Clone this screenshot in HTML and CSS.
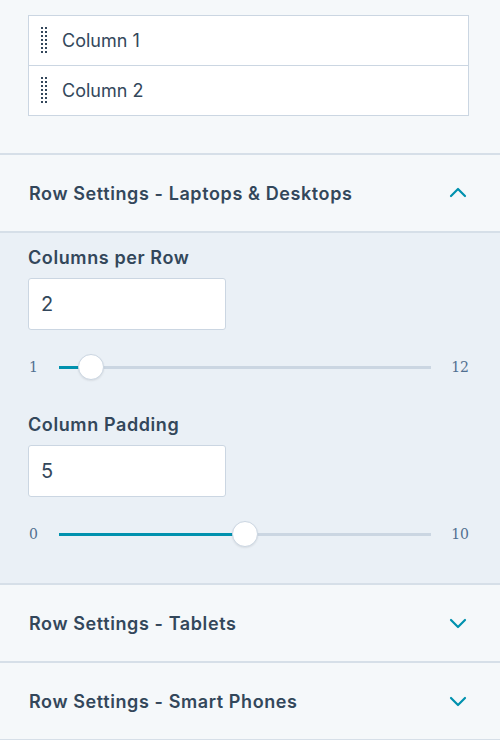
FILE: index.html
```html
<!DOCTYPE html>
<html>
<head>
<meta charset="utf-8">
<link rel="stylesheet" href="styles.css">
</head>
<body>
<div class="panel">
  <div class="top">
    <div class="list">
      <div class="item">
        <svg class="grip" width="8" height="30" viewBox="0 0 8 30">
          <g fill="#33475b">
            <rect x="0" y="0" width="2" height="2"/><rect x="4" y="0" width="2" height="2"/>
            <rect x="0" y="4" width="2" height="2"/><rect x="4" y="4" width="2" height="2"/>
            <rect x="0" y="8" width="2" height="2"/><rect x="4" y="8" width="2" height="2"/>
            <rect x="0" y="12" width="2" height="2"/><rect x="4" y="12" width="2" height="2"/>
            <rect x="0" y="16" width="2" height="2"/><rect x="4" y="16" width="2" height="2"/>
            <rect x="0" y="20" width="2" height="2"/><rect x="4" y="20" width="2" height="2"/>
            <rect x="0" y="24" width="2" height="2"/><rect x="4" y="24" width="2" height="2"/>
          </g>
        </svg>
        <span>Column 1</span>
      </div>
      <div class="item">
        <svg class="grip" width="8" height="30" viewBox="0 0 8 30">
          <g fill="#33475b">
            <rect x="0" y="0" width="2" height="2"/><rect x="4" y="0" width="2" height="2"/>
            <rect x="0" y="4" width="2" height="2"/><rect x="4" y="4" width="2" height="2"/>
            <rect x="0" y="8" width="2" height="2"/><rect x="4" y="8" width="2" height="2"/>
            <rect x="0" y="12" width="2" height="2"/><rect x="4" y="12" width="2" height="2"/>
            <rect x="0" y="16" width="2" height="2"/><rect x="4" y="16" width="2" height="2"/>
            <rect x="0" y="20" width="2" height="2"/><rect x="4" y="20" width="2" height="2"/>
            <rect x="0" y="24" width="2" height="2"/><rect x="4" y="24" width="2" height="2"/>
          </g>
        </svg>
        <span>Column 2</span>
      </div>
    </div>
  </div>

  <div class="section open">
    <div class="header">
      <span class="title">Row Settings - Laptops &amp; Desktops</span>
      <svg class="chev" width="18" height="12" viewBox="0 0 18 12"><path d="M2 9 L9 2 L16 9" fill="none" stroke="#0091ae" stroke-width="2.2" stroke-linecap="round" stroke-linejoin="round"/></svg>
    </div>
    <div class="body">
      <div class="field">
        <div class="label">Columns per Row</div>
        <div class="input">2</div>
        <div class="slider">
          <span class="min">1</span>
          <div class="track"><div class="fill" style="width:8.6%"></div><div class="thumb" style="left:8.6%"></div></div>
          <span class="max">12</span>
        </div>
      </div>
      <div class="field">
        <div class="label">Column Padding</div>
        <div class="input">5</div>
        <div class="slider">
          <span class="min">0</span>
          <div class="track"><div class="fill" style="width:50%"></div><div class="thumb" style="left:50%"></div></div>
          <span class="max">10</span>
        </div>
      </div>
    </div>
  </div>

  <div class="section">
    <div class="header">
      <span class="title">Row Settings - Tablets</span>
      <svg class="chev" width="18" height="12" viewBox="0 0 18 12"><path d="M2 3 L9 10 L16 3" fill="none" stroke="#0091ae" stroke-width="2.2" stroke-linecap="round" stroke-linejoin="round"/></svg>
    </div>
  </div>
  <div class="section">
    <div class="header">
      <span class="title">Row Settings - Smart Phones</span>
      <svg class="chev" width="18" height="12" viewBox="0 0 18 12"><path d="M2 3 L9 10 L16 3" fill="none" stroke="#0091ae" stroke-width="2.2" stroke-linecap="round" stroke-linejoin="round"/></svg>
    </div>
  </div>
</div>
</body>
</html>
```

FILE: styles.css
```css
html, body {
  margin: 0;
  padding: 0;
  background: #f5f8fa;
}
body {
  font-family: "Inter", "Liberation Sans", sans-serif;
  color: #33475b;
  width: 500px;
  height: 740px;
  overflow: hidden;
}
.top {
  padding: 15px 31px 37px 28px;
}
.list {
  border: 1px solid #cbd6e2;
  background: #fff;
}
.item {
  height: 49px;
  display: flex;
  align-items: center;
  padding-left: 12px;
  font-size: 18px;
}
.item + .item {
  border-top: 1px solid #cbd6e2;
}
.grip {
  margin-right: 13px;
  margin-top: 2px;
}
.section {
  border-top: 2px solid #d6dfe8;
}
.section:last-child {
  border-bottom: 2px solid #d6dfe8;
}
.header {
  height: 76px;
  display: flex;
  align-items: center;
  justify-content: space-between;
  padding: 0 33px 0 29px;
}
.title {
  font-weight: 600;
  font-size: 18px;
  letter-spacing: 0.6px;
}
.body {
  background: #eaf0f6;
  border-top: 2px solid #d6dfe8;
  padding: 13px 31px 31px 28px;
}
.field + .field {
  margin-top: 28px;
}
.label {
  font-weight: 600;
  font-size: 18px;
  letter-spacing: 0.6px;
  line-height: 24px;
  margin-bottom: 8px;
}
.input {
  width: 184px;
  height: 50px;
  background: #fff;
  border: 1px solid #cbd6e2;
  border-radius: 3px;
  font-size: 20px;
  display: flex;
  align-items: center;
  padding-left: 12px;
}
.slider {
  display: flex;
  align-items: center;
  height: 36px;
  margin-top: 19px;
  font-family: "DejaVu Serif", serif;
  font-size: 14px;
  color: #516f90;
}
.min {
  width: 30px;
  padding-left: 1px;
}
.max {
  width: 38px;
  text-align: right;
}
.track {
  flex: 1;
  height: 3px;
  background: #cbd6e2;
  position: relative;
}
.fill {
  height: 3px;
  background: #0091ae;
}
.thumb {
  position: absolute;
  top: 50%;
  width: 24px;
  height: 24px;
  margin: -13px 0 0 -13px;
  background: #fff;
  border: 1px solid #cbd6e2;
  border-radius: 50%;
  box-shadow: 0 1px 2px rgba(0,0,0,0.08);
}
```
